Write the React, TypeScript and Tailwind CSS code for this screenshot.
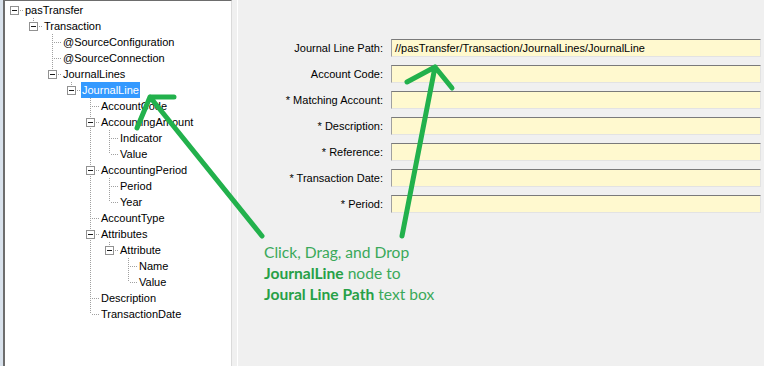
type TreeNode = { label: string; children?: TreeNode[]; selected?: boolean };

const tree: TreeNode = {
  label: "pasTransfer",
  children: [
    {
      label: "Transaction",
      children: [
        { label: "@SourceConfiguration" },
        { label: "@SourceConnection" },
        {
          label: "JournalLines",
          children: [
            {
              label: "JournalLine",
              selected: true,
              children: [
                { label: "AccountCode" },
                { label: "AccountingAmount", children: [{ label: "Indicator" }, { label: "Value" }] },
                { label: "AccountingPeriod", children: [{ label: "Period" }, { label: "Year" }] },
                { label: "AccountType" },
                {
                  label: "Attributes",
                  children: [{ label: "Attribute", children: [{ label: "Name" }, { label: "Value" }] }],
                },
                { label: "Description" },
                { label: "TransactionDate" },
              ],
            },
          ],
        },
      ],
    },
  ],
};

type Row = { node: TreeNode; level: number; guides: boolean[]; hasNext: boolean };

function flatten(node: TreeNode, level: number, guides: boolean[], hasNext: boolean, out: Row[]) {
  out.push({ node, level, guides, hasNext });
  const kids = node.children ?? [];
  kids.forEach((c, i) => flatten(c, level + 1, [...guides, hasNext], i < kids.length - 1, out));
  return out;
}

const rows = flatten(tree, 0, [], false, []);

const dot = { stroke: "#a0a0a0", strokeWidth: 1, strokeDasharray: "1 1", shapeRendering: "crispEdges" as const };

function GuideCell({ line }: { line: boolean }) {
  return (
    <svg width={19} height={16} className="shrink-0">
      {line ? <line x1={9.5} y1={0} x2={9.5} y2={16} {...dot} /> : null}
    </svg>
  );
}

function NodeCell({ row }: { row: Row }) {
  const hasKids = !!row.node.children?.length;
  return (
    <svg width={19} height={16} className="shrink-0">
      {row.level > 0 ? <line x1={9.5} y1={0} x2={9.5} y2={8} {...dot} /> : null}
      {row.hasNext ? <line x1={9.5} y1={8} x2={9.5} y2={16} {...dot} /> : null}
      <line x1={hasKids ? 15 : 11} y1={8.5} x2={19} y2={8.5} {...dot} />
      {hasKids ? (
        <g shapeRendering="crispEdges">
          <rect x={5.5} y={4.5} width={8} height={8} fill="#fff" stroke="#919191" />
          <line x1={7} y1={8.5} x2={12} y2={8.5} stroke="#1a1a1a" />
        </g>
      ) : null}
    </svg>
  );
}

function Tree() {
  return (
    <div className="flex flex-col pt-px">
      {rows.map((row, i) => (
        <div key={i} className="flex h-4 items-center">
          {row.guides.map((g, k) => (
            <GuideCell key={k} line={g} />
          ))}
          <NodeCell row={row} />
          <span
            className={
              row.node.selected
                ? "bg-[#3399ff] px-[1px] leading-4 text-white"
                : "px-[1px] leading-4 text-black"
            }
          >
            {row.node.label}
          </span>
        </div>
      ))}
    </div>
  );
}

const fields: { label: string; value?: string }[] = [
  { label: "Journal Line Path:", value: "//pasTransfer/Transaction/JournalLines/JournalLine" },
  { label: "Account Code:" },
  { label: "* Matching Account:" },
  { label: "* Description:" },
  { label: "* Reference:" },
  { label: "* Transaction Date:" },
  { label: "* Period:" },
];

function Arrows() {
  const g = { stroke: "#22b14c", strokeWidth: 5, strokeLinecap: "round" as const, fill: "none" };
  return (
    <svg className="pointer-events-none absolute inset-0" width={764} height={366}>
      <path d="M262 236 L150 97 M150 97 L174 97 M150 97 L137 128" {...g} />
      <path d="M402 236 L435 67 M435 67 L407 82 M435 67 L452 88" {...g} />
    </svg>
  );
}

export default function App() {
  return (
    <div className="relative flex h-[366px] w-[764px] overflow-hidden bg-[#f0f0f0] font-['Liberation_Sans',Arial,sans-serif] text-[11px]">
      <div className="w-[3px] shrink-0 bg-[#d9e2ec]" />
      <div className="w-[229px] shrink-0 border-t border-l-2 border-r border-t-[#6d6d6d] border-l-[#6d6d6d] border-r-[#dadada] bg-white">
        <Tree />
      </div>
      <div className="w-[5px] shrink-0" />
      <div className="w-px shrink-0 bg-white" />
      <div className="flex flex-1 flex-col pt-[39px] pr-[3px]">
        <div className="grid grid-cols-[145px_1fr] gap-x-2 gap-y-2">
          {fields.map((f) => (
            <div key={f.label} className="contents">
              <div className="flex h-[18px] items-center justify-end text-black">{f.label}</div>
              <div className="flex h-[18px] items-center border-t border-l border-r border-b border-t-[#7a7a7a] border-l-[#a0a0a0] border-r-[#e3e3e3] border-b-[#e3e3e3] bg-[#fff9cf] px-[3px] text-black">
                {f.value}
              </div>
            </div>
          ))}
        </div>
        <div className="mt-[29px] pl-[26px] font-['Lato',sans-serif] text-[15.6px] leading-[21px] text-[#3aa95a]">
          <div>Click, Drag, and Drop</div>
          <div>
            <b className="text-[#27a047]">JournalLine</b> node to
          </div>
          <div>
            <b className="text-[#27a047]">Joural Line Path</b> text box
          </div>
        </div>
      </div>
      <Arrows />
    </div>
  );
}
